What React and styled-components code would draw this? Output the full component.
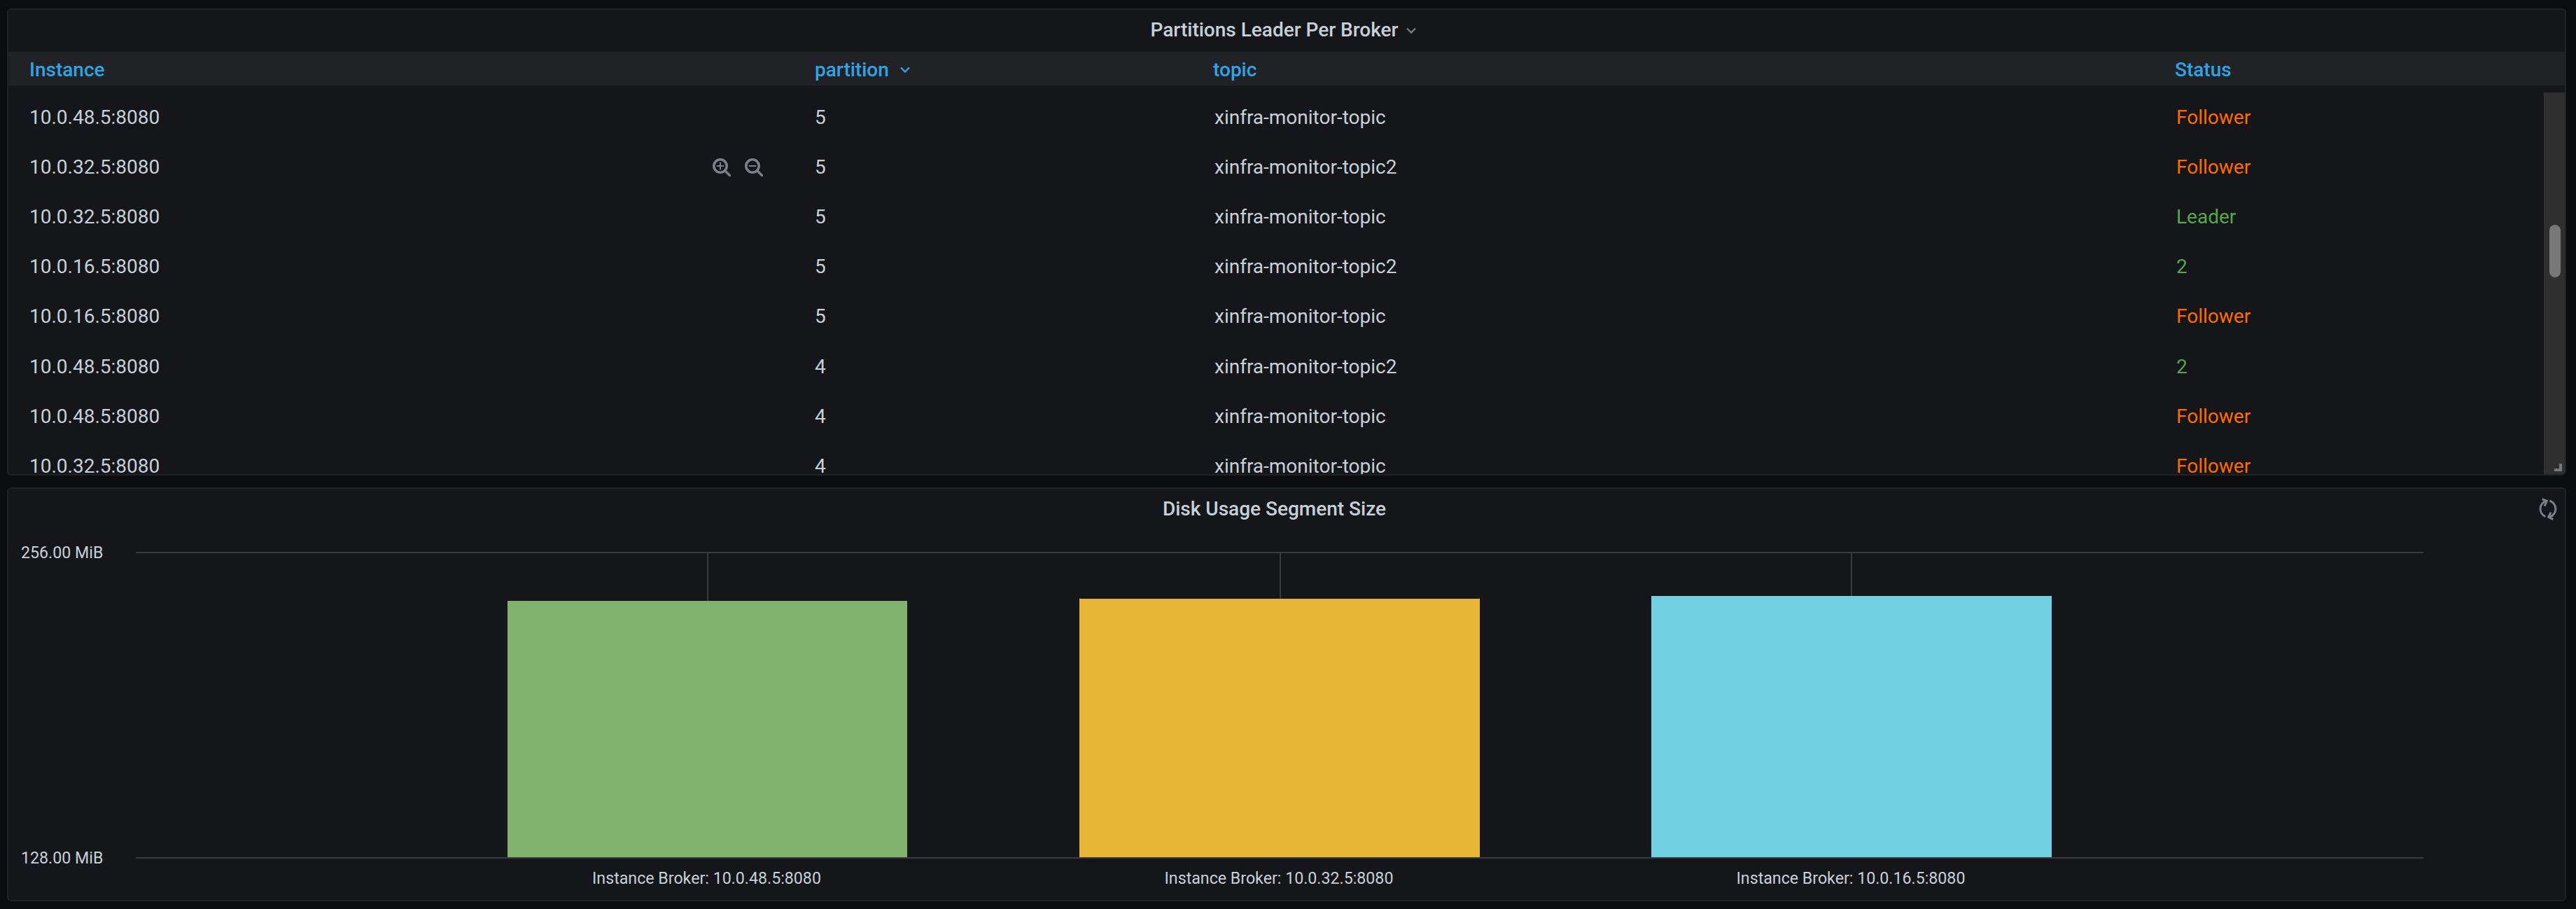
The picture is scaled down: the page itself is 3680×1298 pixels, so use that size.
import React from 'react';
import styled, { createGlobalStyle } from 'styled-components';

const Global = createGlobalStyle`
  html, body { margin: 0; padding: 0; background: #0b0c0e; overflow: hidden; }
  * { box-sizing: border-box; }
`;

const Page = styled.div`
  width: 3680px;
  height: 1298px;
  padding: 12px 14px 11px 10px;
  display: flex;
  flex-direction: column;
  gap: 17px;
  background: #0b0c0e;
  font-family: Roboto, "Liberation Sans", sans-serif;
  color: #c7d0d9;
`;

const Panel = styled.section`
  position: relative;
  display: flex;
  flex-direction: column;
  height: ${p => p.$height}px;
  background: #141619;
  border: 2px solid #202226;
  border-radius: 6px;
  overflow: hidden;
`;

const PanelHeader = styled.header`
  flex: none;
  height: 60px;
  padding: 0 9px 2px 0;
  display: flex;
  align-items: center;
  justify-content: center;
  gap: 12px;
`;

const PanelTitle = styled.h2`
  margin: 0;
  font-size: 28px;
  font-weight: 500;
  line-height: 32px;
  color: #c7d0d9;
`;

const ChevronIcon = styled.svg`
  flex: none;
  width: 14px;
  height: 9px;
  fill: none;
  stroke: ${p => p.$color || '#7b8087'};
  stroke-width: 2.4;
  visibility: ${p => (p.$hidden ? 'hidden' : 'visible')};
`;

const Chevron = props => (
  <ChevronIcon viewBox="0 0 14 9" {...props}>
    <polyline points="1,1.5 7,7.5 13,1.5" />
  </ChevronIcon>
);

const gridColumns = '1122px 569px 1374px 1fr';

const TableHead = styled.div`
  flex: none;
  height: 48px;
  padding-top: 3px;
  display: grid;
  grid-template-columns: ${gridColumns};
  align-items: center;
  background: #202226;
`;

const HeadCell = styled.div`
  padding-left: 30px;
  display: flex;
  align-items: center;
  gap: 16px;
  font-size: 28px;
  font-weight: 500;
  color: #33a2e5;
  line-height: 32px;
`;

const TableBody = styled.div`
  position: relative;
  flex: 1;
  min-height: 0;
  padding-top: 10px;
  overflow: hidden;
`;

const Row = styled.div`
  height: 71.2px;
  display: grid;
  grid-template-columns: ${gridColumns};
  align-items: center;
`;

const Cell = styled.div`
  position: relative;
  padding-left: ${p => (p.$inset ? 32 : 30)}px;
  font-size: 28px;
  line-height: 24px;
  color: ${p => p.$color || '#c7d0d9'};
`;

const CellActions = styled.div`
  position: absolute;
  top: -1px;
  right: 44px;
  display: flex;
  gap: 20px;
`;

const ZoomSvg = styled.svg`
  display: block;
  width: 26px;
  height: 26px;
  fill: none;
  stroke: #7b8087;
  stroke-linecap: round;
`;

const ZoomGlyph = ({ plus }) => (
  <ZoomSvg viewBox="0 0 26 26">
    <circle cx="11" cy="11" r="9.2" strokeWidth="3.6" />
    <line x1="18" y1="18" x2="24.5" y2="24.5" strokeWidth="3.4" />
    <line x1="6.5" y1="11" x2="15.5" y2="11" strokeWidth="2" />
    {plus && <line x1="11" y1="6.5" x2="11" y2="15.5" strokeWidth="2" />}
  </ZoomSvg>
);

const ScrollTrack = styled.div`
  position: absolute;
  top: 10px;
  right: 0;
  bottom: 0;
  width: 30px;
  background: #2f2f2f;
`;

const ScrollThumb = styled.div`
  position: absolute;
  top: 189px;
  left: 8px;
  width: 16px;
  height: 75px;
  border-radius: 8px;
  background: #787878;
`;

const ResizeGrip = styled.svg`
  position: absolute;
  right: 4px;
  bottom: 4px;
  width: 11px;
  height: 11px;
  fill: #777;
`;

const RefreshSvg = styled.svg`
  position: absolute;
  top: 12px;
  right: 10px;
  width: 30px;
  height: 33px;
  fill: none;
  stroke: #7b8087;
  stroke-width: 3;
`;

const ChartSvg = styled.svg`
  display: block;
  flex: 1;
  width: 100%;
  min-height: 0;
`;

const AxisText = styled.text`
  font-family: Roboto, "Liberation Sans", sans-serif;
  font-size: 23.2px;
  fill: #c7d0d9;
`;

const ORANGE = '#ff6a00';
const GREEN = '#56a64b';

const rows = [
  ['10.0.48.5:8080', '5', 'xinfra-monitor-topic', 'Follower', ORANGE],
  ['10.0.32.5:8080', '5', 'xinfra-monitor-topic2', 'Follower', ORANGE],
  ['10.0.32.5:8080', '5', 'xinfra-monitor-topic', 'Leader', GREEN],
  ['10.0.16.5:8080', '5', 'xinfra-monitor-topic2', '2', GREEN],
  ['10.0.16.5:8080', '5', 'xinfra-monitor-topic', 'Follower', ORANGE],
  ['10.0.48.5:8080', '4', 'xinfra-monitor-topic2', '2', GREEN],
  ['10.0.48.5:8080', '4', 'xinfra-monitor-topic', 'Follower', ORANGE],
  ['10.0.32.5:8080', '4', 'xinfra-monitor-topic', 'Follower', ORANGE],
];

const bars = [
  { x: 725, w: 571, top: 858, color: '#80b26e', stem: 1010, label: 'Instance Broker: 10.0.48.5:8080' },
  { x: 1542, w: 572, top: 855, color: '#e8b637', stem: 1828, label: 'Instance Broker: 10.0.32.5:8080' },
  { x: 2359, w: 572, top: 851, color: '#71d0e2', stem: 2644, label: 'Instance Broker: 10.0.16.5:8080' },
];

const GRID = '#3a3b3f';

export default function App() {
  return (
    <Page>
      <Global />
      <Panel $height={667}>
        <PanelHeader>
          <PanelTitle>Partitions Leader Per Broker</PanelTitle>
          <Chevron />
        </PanelHeader>
        <TableHead>
          <HeadCell>Instance</HeadCell>
          <HeadCell>
            partition
            <Chevron $color="#33a2e5" />
          </HeadCell>
          <HeadCell>topic</HeadCell>
          <HeadCell>Status</HeadCell>
        </TableHead>
        <TableBody>
          {rows.map((r, i) => (
            <Row key={i}>
              <Cell>
                {r[0]}
                {i === 1 && (
                  <CellActions>
                    <ZoomGlyph plus />
                    <ZoomGlyph />
                  </CellActions>
                )}
              </Cell>
              <Cell>{r[1]}</Cell>
              <Cell $inset>{r[2]}</Cell>
              <Cell $inset $color={r[4]}>{r[3]}</Cell>
            </Row>
          ))}
          <ScrollTrack>
            <ScrollThumb />
            <ResizeGrip viewBox="0 0 11 11">
              <path d="M7 0h4v11H0V7h7z" />
            </ResizeGrip>
          </ScrollTrack>
        </TableBody>
      </Panel>
      <Panel $height={591}>
        <PanelHeader>
          <PanelTitle>Disk Usage Segment Size</PanelTitle>
          <Chevron $hidden />
        </PanelHeader>
        <RefreshSvg viewBox="0 0 30 33">
          <path d="M13.3 5.3A12 12 0 0 0 12.3 27.7" />
          <path d="M18.3 5A12.2 12.2 0 0 1 18.3 28.3" />
          <polyline points="7.7,2.7 14.3,5.3 11,12.7" />
          <polyline points="23.3,31.7 16.7,28.3 20,21.7" />
        </RefreshSvg>
        <ChartSvg viewBox="12 758 3652 527" preserveAspectRatio="none">
          <rect x="194" y="788" width="3268" height="2" fill={GRID} />
          {bars.map(b => (
            <g key={b.x}>
              <rect x={b.stem} y="788" width="2" height={b.top - 788} fill={GRID} />
              <rect x={b.x} y={b.top} width={b.w} height={1224 - b.top} fill={b.color} />
              <AxisText x={b.x + b.w / 2 - 1} y="1262" textAnchor="middle">{b.label}</AxisText>
            </g>
          ))}
          <rect x="194" y="1224" width="3268" height="2" fill={GRID} />
          <AxisText x="30" y="797">256.00 MiB</AxisText>
          <AxisText x="30" y="1233">128.00 MiB</AxisText>
        </ChartSvg>
      </Panel>
    </Page>
  );
}
